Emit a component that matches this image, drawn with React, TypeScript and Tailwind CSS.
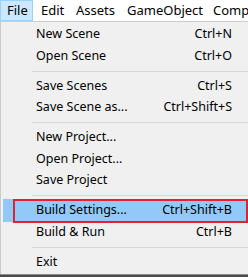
import React from "react";

type Entry = { label: string; keys?: string; active?: boolean } | "sep";

const entries: Entry[] = [
  { label: "New Scene", keys: "Ctrl+N" },
  { label: "Open Scene", keys: "Ctrl+O" },
  "sep",
  { label: "Save Scenes", keys: "Ctrl+S" },
  { label: "Save Scene as...", keys: "Ctrl+Shift+S" },
  "sep",
  { label: "New Project..." },
  { label: "Open Project..." },
  { label: "Save Project" },
  "sep",
  { label: "Build Settings...", keys: "Ctrl+Shift+B", active: true },
  { label: "Build & Run", keys: "Ctrl+B" },
  "sep",
  { label: "Exit" },
];

export default function App() {
  return (
    <div className="w-[248px] h-[277px] overflow-hidden bg-white text-[#000] font-['Noto_Sans',sans-serif]">
      {/* menu bar */}
      <div className="flex h-[21px] items-center text-[13px] whitespace-nowrap">
        <div className="shrink-0 h-[21px] w-[33px] pl-[6px] flex items-center bg-[#cce8ff] border border-[#99d1ff]">
          File
        </div>
        <div className="shrink-0 ml-[8px] w-[35px]">Edit</div>
        <div className="shrink-0 w-[51px]">Assets</div>
        <div className="shrink-0 w-[86px]">GameObject</div>
        <div className="shrink-0">Comp</div>
      </div>

      {/* dropdown */}
      <div className="w-[262px] bg-[#f0f0f0] border-t border-l border-[#cccccc] pt-[2px] pb-[1px] text-[12.5px]">
        {entries.map((e, i) =>
          e === "sep" ? (
            <div key={i} className="h-[8.5px] flex items-center pl-[31px]">
              <div className="h-px w-full bg-[#d7d7d7]" />
            </div>
          ) : (
            <div key={i} className="relative h-[21.5px] flex items-center">
              {e.active && (
                <>
                  <div className="absolute left-[2px] right-0 -top-[1px] bottom-0 bg-[#91c9f7]" />
                  <div className="absolute left-[12px] w-[235px] -top-[1px] h-[24px] border-2 border-[#e3222b]" />
                </>
              )}
              <div className="relative ml-[35px] w-[196px] flex justify-between whitespace-nowrap">
                <span>{e.label}</span>
                {e.keys && <span>{e.keys}</span>}
              </div>
            </div>
          )
        )}
      </div>
      <div className="h-px w-full bg-[#8a8a8a]" />
      <div className="h-[2px] w-full bg-[#4a4a4a]" />
    </div>
  );
}
